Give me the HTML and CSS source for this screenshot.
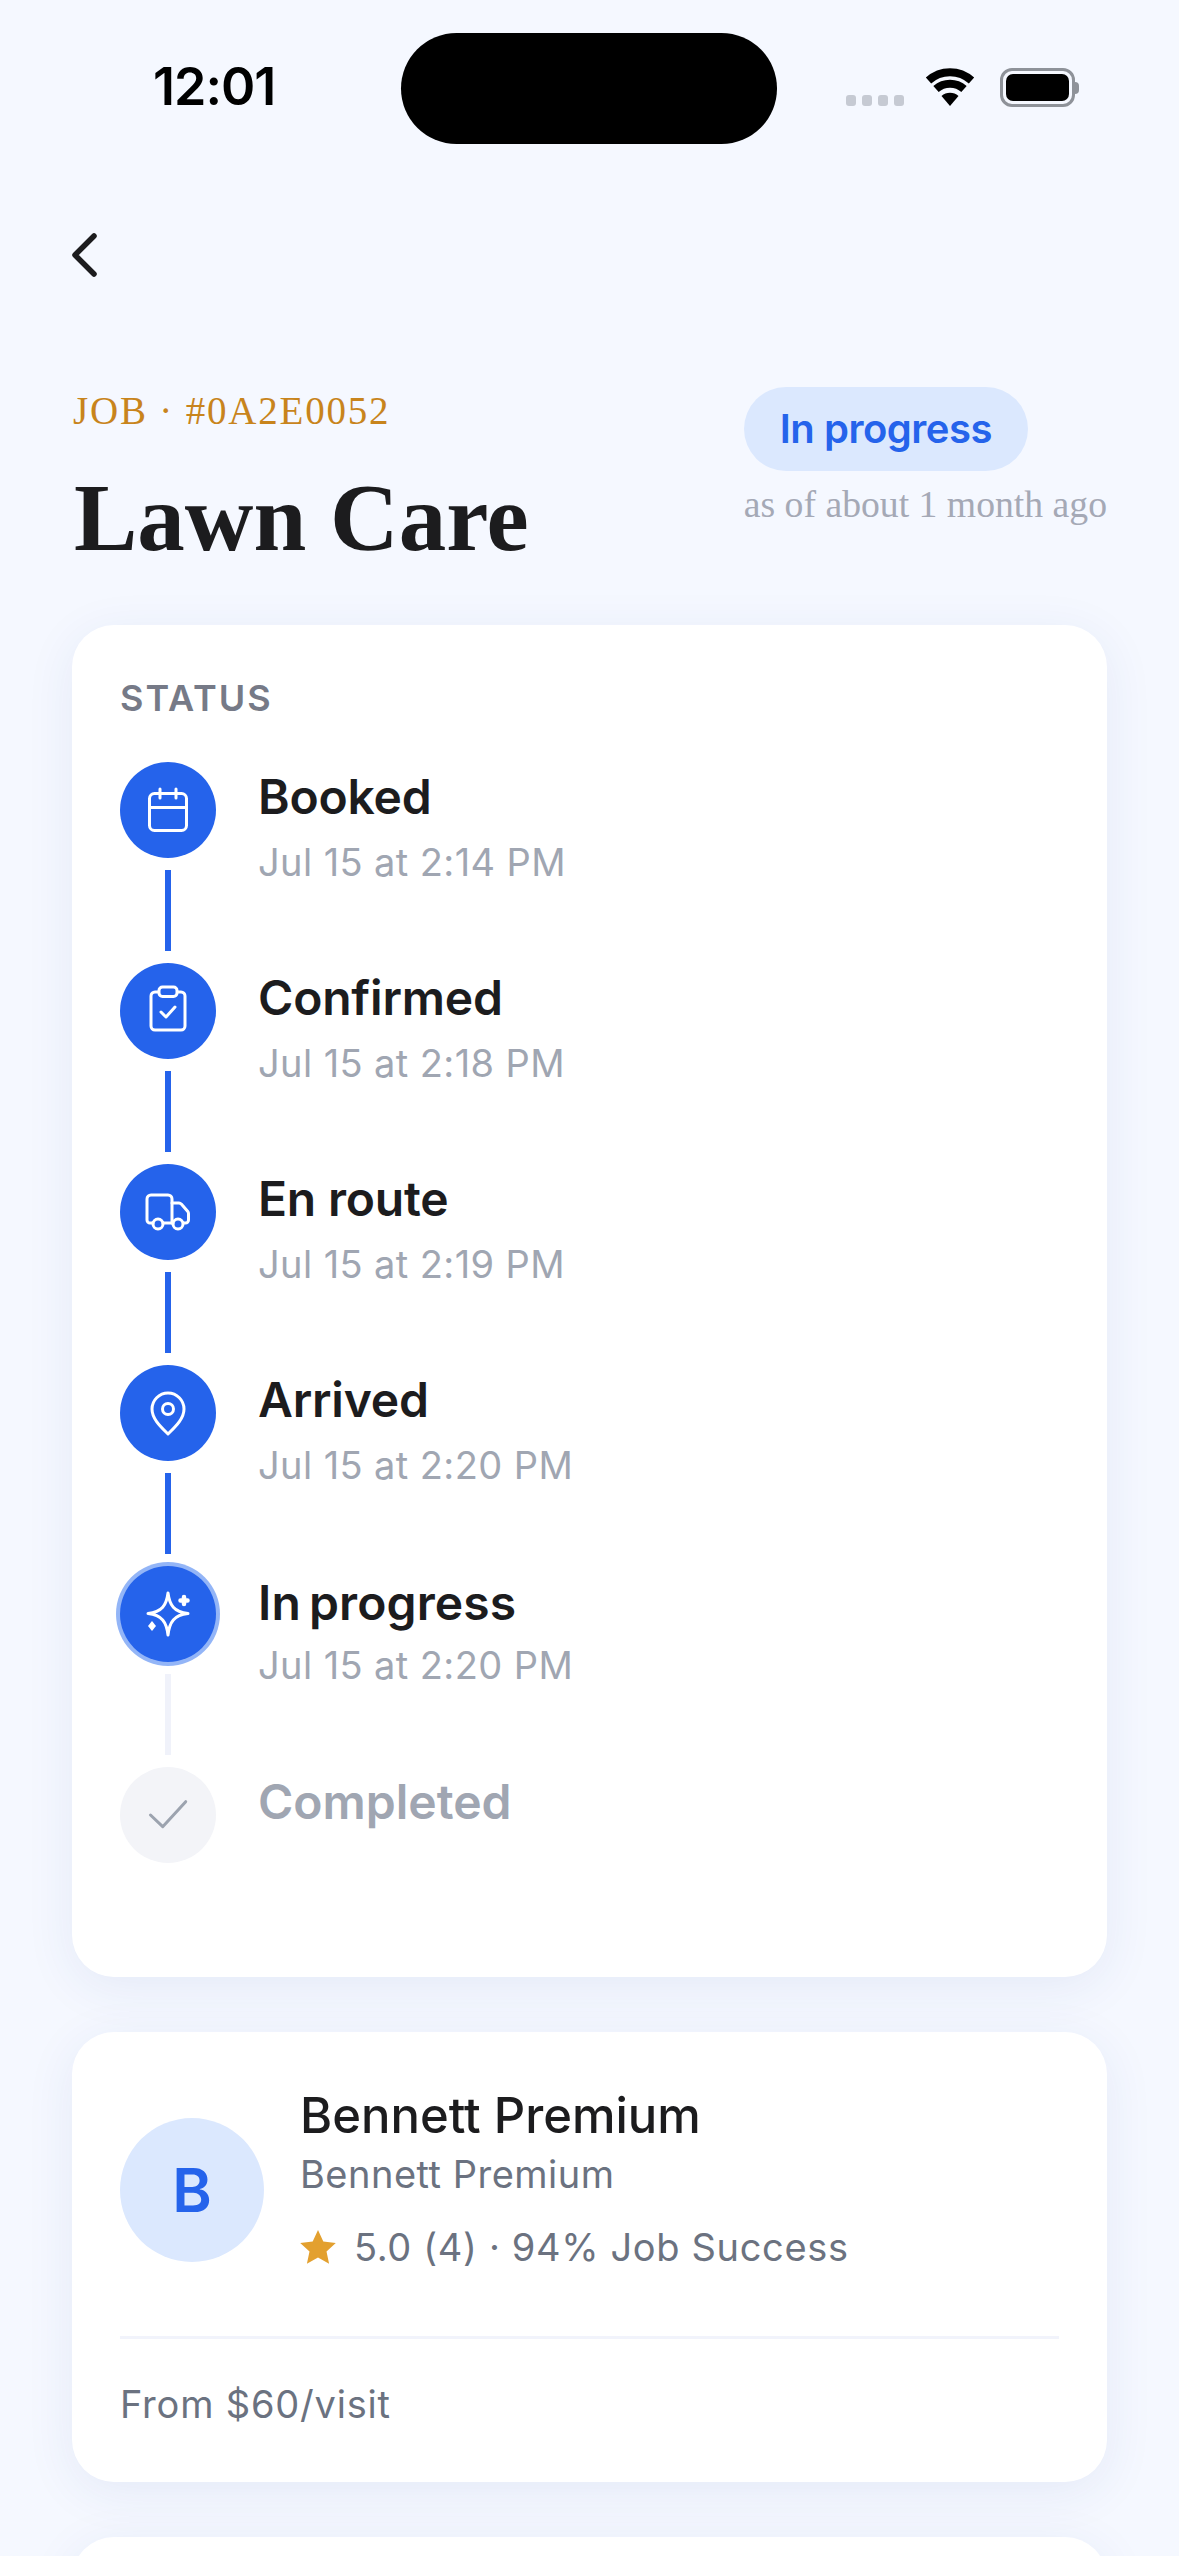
FILE: index.html
```html
<!DOCTYPE html>
<html lang="en">

<head>
    <meta charset="UTF-8">
    <meta name="viewport" content="width=device-width, initial-scale=1.0">
    <title>Lawn Care</title>
    <link rel="stylesheet" href="styles.css">
</head>

<body>
    <div class="status-bar">
        <div class="time">12:01</div>
        <div class="island"></div>
        <div class="status-icons">
            <div class="signal"><span></span><span></span><span></span><span></span></div>
            <svg class="wifi" width="50" height="38" viewBox="0 0 50 38">
                <path d="M25 38 16.500 28a13 13 0 0 1 17 0Z" fill="#000" />
                <path d="M11 21a21 21 0 0 1 28 0M3.500 12.500a32 32 0 0 1 43 0" fill="none" stroke="#000" stroke-width="8" />
            </svg>
            <div class="battery"><div class="battery-fill"></div></div>
            <div class="battery-cap"></div>
        </div>
    </div>

    <div class="back-row">
        <svg width="28" height="44" viewBox="0 0 28 44">
            <path d="M24 3 5 22l19 19" fill="none" stroke="#1c1c1e" stroke-width="5.500" stroke-linecap="round" stroke-linejoin="round" />
        </svg>
    </div>

    <div class="job-header">
        <div class="job-left">
            <div class="job-id">JOB · #0A2E0052</div>
            <h1 class="job-title">Lawn Care</h1>
        </div>
        <div class="job-right">
            <div class="pill">In progress</div>
            <div class="as-of">as of about 1 month ago</div>
        </div>
    </div>

    <div class="card status-card">
        <div class="card-label">STATUS</div>

        <div class="step">
            <div class="step-track">
                <div class="step-dot">
                    <svg class="step-icon" viewBox="0 0 48 48">
                        <rect x="5.500" y="7.500" width="37" height="37" rx="5" />
                        <path d="M5.500 21.500h37M16 3v9M32 3v9" />
                    </svg>
                </div>
                <div class="step-line"></div>
            </div>
            <div class="step-text">
                <div class="step-name">Booked</div>
                <div class="step-date">Jul 15 at 2:14 PM</div>
            </div>
        </div>

        <div class="step">
            <div class="step-track">
                <div class="step-dot">
                    <svg class="step-icon" viewBox="0 0 48 48">
                        <path d="M14 5h-3a4 4 0 0 0-4 4v30a4 4 0 0 0 4 4h26a4 4 0 0 0 4-4V9a4 4 0 0 0-4-4h-3" />
                        <rect x="15" y="0" width="18" height="9.500" rx="3.500" />
                        <path d="m17 25 5 5 9-10" />
                    </svg>
                </div>
                <div class="step-line"></div>
            </div>
            <div class="step-text">
                <div class="step-name">Confirmed</div>
                <div class="step-date">Jul 15 at 2:18 PM</div>
            </div>
        </div>

        <div class="step">
            <div class="step-track">
                <div class="step-dot">
                    <svg class="step-icon" viewBox="0 0 48 48">
                        <path d="M9 35H6a3 3 0 0 1-3-3V11a4 4 0 0 1 4-4h17a4 4 0 0 1 4 4v24H19" />
                        <path d="M28 15h7a3 3 0 0 1 2.300 1.100l6.500 7.500a3 3 0 0 1 .7 2V32a3 3 0 0 1-3 3h-2M28 35h1" />
                        <circle cx="14" cy="36" r="5" />
                        <circle cx="34" cy="36" r="5" />
                    </svg>
                </div>
                <div class="step-line"></div>
            </div>
            <div class="step-text">
                <div class="step-name">En route</div>
                <div class="step-date">Jul 15 at 2:19 PM</div>
            </div>
        </div>

        <div class="step">
            <div class="step-track">
                <div class="step-dot">
                    <svg class="step-icon" viewBox="0 0 48 48">
                        <path d="M24 45C17 38 8 30 8 20a16 16 0 0 1 32 0c0 10-9 18-16 25Z" />
                        <circle cx="24" cy="20" r="5.500" />
                    </svg>
                </div>
                <div class="step-line"></div>
            </div>
            <div class="step-text">
                <div class="step-name">Arrived</div>
                <div class="step-date">Jul 15 at 2:20 PM</div>
            </div>
        </div>

        <div class="step">
            <div class="step-track">
                <div class="step-dot step-dot-active">
                    <svg class="step-icon" viewBox="0 0 48 48">
                        <path d="M24 3c1.500 12 6 19 20 20.500C30 25 25.500 32 24 45c-1.500-13-6-20-20-21.500C18 22 22.500 15 24 3Z" />
                        <path class="step-icon-bold" d="M40 7v7M36.500 10.500h7" />
                        <path class="step-icon-fill" d="m8 31 4 5-4 5-4-5Z" />
                    </svg>
                </div>
                <div class="step-line step-line-pending"></div>
            </div>
            <div class="step-text">
                <div class="step-name step-name-alt">In progress</div>
                <div class="step-date step-date-alt">Jul 15 at 2:20 PM</div>
            </div>
        </div>

        <div class="step step-last">
            <div class="step-track">
                <div class="step-dot step-dot-pending">
                    <svg class="step-icon step-icon-pending" viewBox="0 0 48 48">
                        <path d="m6.500 24 12.200 11.700 23-25" />
                    </svg>
                </div>
            </div>
            <div class="step-text">
                <div class="step-name step-name-pending">Completed</div>
            </div>
        </div>
    </div>

    <div class="card pro-card">
        <div class="pro-row">
            <div class="avatar">B</div>
            <div class="pro-info">
                <div class="pro-name">Bennett Premium</div>
                <div class="pro-company">Bennett Premium</div>
                <div class="pro-rating">
                    <svg width="36" height="34" viewBox="0 0 36 34">
                        <path d="M18 0l5.300 11.500 12.500 1.400-9.300 8.500 2.600 12.400L18 27.500 6.900 33.800l2.600-12.400L.2 12.900l12.500-1.400Z" fill="#e3a02f" />
                    </svg>
                    <span>5.0 (4) · 94% Job Success</span>
                </div>
            </div>
        </div>
        <div class="pro-price">From $60/visit</div>
    </div>

    <div class="card next-card"></div>
</body>

</html>
```

FILE: styles.css
```css
* {
    box-sizing: border-box;
}

html,
body {
    margin: 0;
    height: 2556px;
    overflow: hidden;
}

body {
    background-color: #f5f8ff;
    font-family: Inter, "Liberation Sans", sans-serif;
    color: #1c1c1e;
}

/* status bar */
.status-bar {
    display: flex;
    align-items: flex-start;
    height: 144px;
    padding-top: 33px;
}

.time {
    width: 401px;
    padding: 31px 0 0 153px;
    font-size: 52px;
    line-height: 46px;
    font-weight: 600;
    letter-spacing: -1px;
    color: #000;
}

.island {
    width: 376px;
    height: 111px;
    border-radius: 56px;
    background-color: #000;
}

.status-icons {
    display: flex;
    align-items: flex-start;
    padding: 35px 0 0 69px;
}

.signal {
    display: flex;
    gap: 6px;
    margin-top: 27px;
    margin-right: 21px;
}

.signal span {
    width: 10px;
    height: 11px;
    border-radius: 3px;
    background-color: #c6cad3;
}

.battery {
    width: 75px;
    height: 39px;
    margin-left: 25px;
    padding: 3px;
    border: 3px solid #8e9299;
    border-radius: 12px;
}

.battery-fill {
    height: 100%;
    border-radius: 7px;
    background-color: #000;
}

.battery-cap {
    width: 4px;
    height: 12px;
    margin-top: 14px;
    border-radius: 0 4px 4px 0;
    background-color: #8e9299;
}

.back-row {
    display: flex;
    height: 92px;
    padding: 89px 0 0 70px;
}

/* header */
.job-header {
    display: flex;
    justify-content: space-between;
    height: 389px;
    padding: 151px 72px 0 72px;
}

.job-id {
    margin: 3px 0 0 1px;
    font-family: "Liberation Serif", serif;
    font-size: 39px;
    line-height: 42px;
    letter-spacing: 1.800px;
    color: #c8841c;
}

.job-title {
    margin: 36px 0 0 2px;
    font-family: "Liberation Serif", serif;
    font-size: 95px;
    line-height: 100px;
    font-weight: 700;
    color: #1c1c1e;
}

.job-right {
    display: flex;
    flex-direction: column;
    align-items: flex-start;
}

.pill {
    padding: 0 36px;
    height: 84px;
    border-radius: 42px;
    background-color: #dbe8fe;
    font-size: 40px;
    line-height: 84px;
    font-weight: 600;
    letter-spacing: -0.500px;
    color: #2563eb;
}

.as-of {
    margin-top: 12px;
    font-family: "Liberation Serif", serif;
    font-size: 37.700px;
    line-height: 42px;
    color: #a5a9b6;
}

/* cards */
.card {
    margin: 0 72px;
    border-radius: 42px;
    background-color: #fff;
    box-shadow: 0 10px 50px rgba(40, 70, 150, 0.08);
}

.status-card {
    height: 1352px;
    padding: 51px 48px 0 48px;
}

.card-label {
    height: 86px;
    font-size: 36px;
    line-height: 44px;
    font-weight: 600;
    letter-spacing: 2px;
    color: #767a87;
}

.step {
    display: flex;
    height: 201px;
}

.step-track {
    display: flex;
    flex-direction: column;
    align-items: center;
    width: 96px;
    gap: 12px;
}

.step-dot {
    display: flex;
    align-items: center;
    justify-content: center;
    flex-shrink: 0;
    width: 96px;
    height: 96px;
    border-radius: 50%;
    background-color: #2563eb;
}

.step-dot-active {
    box-shadow: 0 0 0 4px #93b5f7;
}

.step-dot-pending {
    background-color: #f3f4f8;
}

.step-icon {
    width: 48px;
    height: 48px;
    overflow: visible;
    fill: none;
    stroke: #fff;
    stroke-width: 3;
    stroke-linecap: round;
    stroke-linejoin: round;
}

.step-icon-bold {
    stroke-width: 4.500;
}

.step-icon-fill {
    fill: #fff;
    stroke: none;
}

.step-icon-pending {
    stroke: #9ca3af;
}

.step-line {
    width: 6px;
    height: 81px;
    background-color: #2563eb;
}

.step-line-pending {
    background-color: #f0f2fa;
}

.step-text {
    padding-left: 42px;
}

.step-name {
    margin-top: 6px;
    font-size: 48px;
    line-height: 58px;
    font-weight: 600;
    letter-spacing: -0.200px;
}

.step-name-alt {
    word-spacing: -4px;
    letter-spacing: 0.100px;
    margin-top: 8px;
}

.step-name-pending {
    margin-top: 6px;
    letter-spacing: 0;
    color: #a0a6b2;
}

.step-date {
    margin-top: 13px;
    font-size: 38px;
    line-height: 46px;
    letter-spacing: 0.400px;
    color: #a0a6b2;
}

.step-date-alt {
    margin-top: 10px;
}

/* pro card */
.pro-card {
    height: 450px;
    margin-top: 55px;
    padding: 0 48px;
}

.pro-row {
    display: flex;
    height: 307px;
    border-bottom: 3px solid #f1f3fb;
}

.avatar {
    width: 144px;
    height: 144px;
    margin-top: 86px;
    border-radius: 50%;
    background-color: #dbe8fe;
    font-size: 60px;
    line-height: 144px;
    font-weight: 600;
    text-align: center;
    color: #2563eb;
}

.pro-info {
    padding: 54px 0 0 36px;
}

.pro-name {
    font-size: 49px;
    line-height: 60px;
    font-weight: 500;
}

.pro-company {
    margin-top: 5px;
    font-size: 38px;
    line-height: 46px;
    letter-spacing: 0.500px;
    color: #6b7280;
}

.pro-rating {
    display: flex;
    align-items: center;
    gap: 18px;
    margin-top: 27px;
    font-size: 38px;
    line-height: 46px;
    letter-spacing: 0.650px;
    color: #6b7280;
}

.pro-price {
    padding-top: 42px;
    font-size: 38px;
    line-height: 46px;
    letter-spacing: 0.800px;
    color: #6b7280;
}

.next-card {
    height: 200px;
    margin-top: 55px;
}
```
